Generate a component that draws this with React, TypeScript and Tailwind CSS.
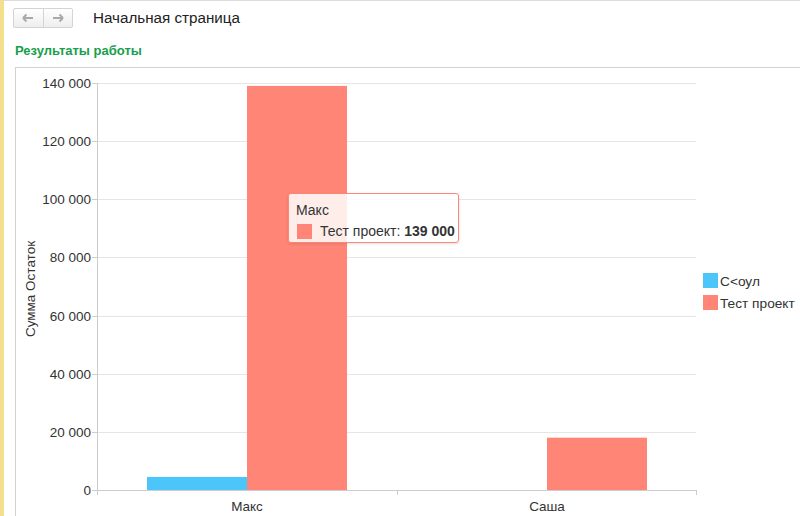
import React from "react";

const RED = "#ff8676";
const BLUE = "#4cc6fa";

const X0 = 81;
const X1 = 680;
const Y0 = 422;
const YTOP = 15;
const MAX = 140000;
const scale = (Y0 - YTOP) / MAX;

const ticks = [0, 20000, 40000, 60000, 80000, 100000, 120000, 140000];

const fmt = (n: number) => n.toLocaleString("ru-RU").replace(/\u00a0|\u202f/g, " ");

const bars = [
  { x: 131, value: 4500, color: BLUE },
  { x: 231, value: 139000, color: RED },
  { x: 531, value: 18000, color: RED },
];

function Arrow({ dir }: { dir: "left" | "right" }) {
  return (
    <svg width="12" height="10" viewBox="0 0 12 10" className="text-[#a9a9a9]">
      {dir === "left" ? (
        <path d="M1 5h10M1 5l3.5-3.5M1 5l3.5 3.5" stroke="currentColor" strokeWidth="1.8" fill="none" />
      ) : (
        <path d="M11 5H1M11 5L7.5 1.5M11 5L7.5 8.5" stroke="currentColor" strokeWidth="1.8" fill="none" />
      )}
    </svg>
  );
}

function Chart() {
  return (
    <svg width="784" height="448" className="block" style={{ fontFamily: '"Liberation Sans", Arial, sans-serif' }}>
      {ticks.map((t) => {
        const y = Math.round(Y0 - t * scale) + 0.5;
        return (
          <g key={t}>
            {t > 0 && <line x1={X0} x2={X1} y1={y} y2={y} stroke="#e6e6e6" />}
            <line x1={X0 - 5} x2={X0} y1={y} y2={y} stroke="#cccccc" />
            <text x={75} y={y} textAnchor="end" dominantBaseline="central" fontSize="13.5" fill="#333">
              {fmt(t)}
            </text>
          </g>
        );
      })}
      <line x1={X0 + 0.5} x2={X0 + 0.5} y1={YTOP} y2={Y0} stroke="#cccccc" />

      {bars.map((b) => {
        const h = b.value * scale;
        return <rect key={b.x} x={b.x} y={Y0 - h} width={100} height={h} fill={b.color} />;
      })}

      <line x1={X0} x2={X1} y1={Y0 + 0.5} y2={Y0 + 0.5} stroke="#cccccc" />
      {[X0, 381, X1].map((x) => (
        <line key={x} x1={x + 0.5} x2={x + 0.5} y1={Y0} y2={Y0 + 5} stroke="#cccccc" />
      ))}

      <text x={231} y={438} textAnchor="middle" dominantBaseline="central" fontSize="13.5" fill="#333">
        Макс
      </text>
      <text x={531} y={438} textAnchor="middle" dominantBaseline="central" fontSize="13.5" fill="#333">
        Саша
      </text>

      <text
        x={14}
        y={221}
        transform="rotate(-90 14 221)"
        textAnchor="middle"
        dominantBaseline="central"
        fontSize="13.5"
        fill="#333"
      >
        Сумма Остаток
      </text>

      <rect x={687} y={205} width={15} height={15} fill={BLUE} />
      <text x={704} y={213} dominantBaseline="central" fontSize="13.7" fill="#333">
        С&lt;оул
      </text>
      <rect x={687} y={227} width={15} height={15} fill={RED} />
      <text x={704} y={235} dominantBaseline="central" fontSize="13.7" fill="#333">
        Тест проект
      </text>
    </svg>
  );
}

export default function App() {
  return (
    <div className="w-[800px] h-[516px] overflow-hidden bg-white border-l-4 border-l-[#f4df8c] border-t border-t-[#dcdcdc] font-['Liberation_Sans',Arial,sans-serif] text-[#333]">
      <div className="flex h-[34px] items-center pl-[9px]">
        <div className="flex h-[20px] w-[60px] rounded-[2px] border border-[#d4d4d4] bg-gradient-to-b from-white to-[#eeeeee]">
          <div className="flex flex-1 items-center justify-center border-r border-[#d4d4d4]">
            <Arrow dir="left" />
          </div>
          <div className="flex flex-1 items-center justify-center">
            <Arrow dir="right" />
          </div>
        </div>
        <div className="ml-[20px] text-[15.2px] text-[#222]">Начальная страница</div>
      </div>
      <div className="flex h-[32px] items-center pl-[11px] text-[13px] font-bold text-[#16a04a]">
        Результаты работы
      </div>
      <div className="relative ml-[11px] h-full border-l border-t border-[#d2d2d2]">
        <Chart />
        <div className="absolute left-[272px] top-[125px] h-[50px] w-[171px] rounded-[3px] border border-[#ff8676] bg-white/85 shadow-[0_1px_3px_rgba(0,0,0,0.12)]">
          <div className="pl-[7px] pt-[7px] text-[14px] leading-[18px]">Макс</div>
          <div className="mt-[3px] flex items-center pl-[8px] text-[14px] leading-[18px]">
            <span className="h-[15px] w-[15px] bg-[#ff8676]" />
            <span className="ml-[8px]">
              Тест проект: <b>139 000</b>
            </span>
          </div>
        </div>
      </div>
    </div>
  );
}
